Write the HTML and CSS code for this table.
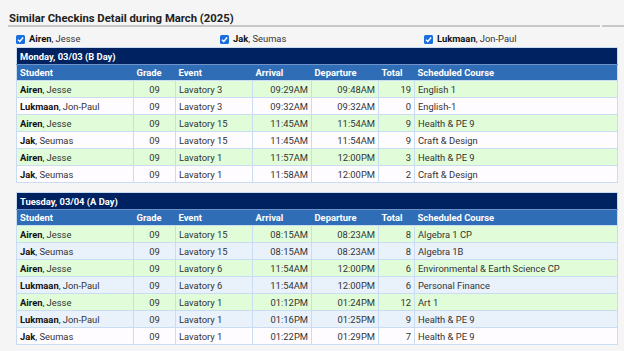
FILE: index.html
```html
<!DOCTYPE html>
<html>
<head>
<meta charset="utf-8">
<link rel="stylesheet" href="styles.css">
</head>
<body>
<div class="title-bar">
  <h1 class="title">Similar Checkins Detail during March (2025)</h1>
  <div class="title-rest"></div>
</div>
<div class="students">
  <label class="student"><span class="cb"><svg viewBox="0 0 10 10" width="9" height="9"><path d="M2.2 5.2 L4.2 7.2 L7.9 2.8" fill="none" stroke="#fff" stroke-width="1.6"/></svg></span><b>Airen</b>, Jesse</label>
  <label class="student"><span class="cb"><svg viewBox="0 0 10 10" width="9" height="9"><path d="M2.2 5.2 L4.2 7.2 L7.9 2.8" fill="none" stroke="#fff" stroke-width="1.6"/></svg></span><b>Jak</b>, Seumas</label>
  <label class="student"><span class="cb"><svg viewBox="0 0 10 10" width="9" height="9"><path d="M2.2 5.2 L4.2 7.2 L7.9 2.8" fill="none" stroke="#fff" stroke-width="1.6"/></svg></span><b>Lukmaan</b>, Jon-Paul</label>
</div>

<table class="day">
  <colgroup>
    <col class="c-student"><col class="c-grade"><col class="c-event"><col class="c-arr"><col class="c-dep"><col class="c-total"><col>
  </colgroup>
  <thead>
    <tr class="day-row"><th colspan="7">Monday, 03/03 (B Day)</th></tr>
    <tr class="head-row"><th>Student</th><th>Grade</th><th>Event</th><th>Arrival</th><th>Departure</th><th>Total</th><th>Scheduled Course</th></tr>
  </thead>
  <tbody>
    <tr class="green"><td><b>Airen</b>, Jesse</td><td class="ctr">09</td><td>Lavatory 3</td><td class="rt">09:29AM</td><td class="rt">09:48AM</td><td class="rt">19</td><td>English 1</td></tr>
    <tr class="white"><td><b>Lukmaan</b>, Jon-Paul</td><td class="ctr">09</td><td>Lavatory 3</td><td class="rt">09:32AM</td><td class="rt">09:32AM</td><td class="rt">0</td><td>English-1</td></tr>
    <tr class="green"><td><b>Airen</b>, Jesse</td><td class="ctr">09</td><td>Lavatory 15</td><td class="rt">11:45AM</td><td class="rt">11:54AM</td><td class="rt">9</td><td>Health &amp; PE 9</td></tr>
    <tr class="white"><td><b>Jak</b>, Seumas</td><td class="ctr">09</td><td>Lavatory 15</td><td class="rt">11:45AM</td><td class="rt">11:54AM</td><td class="rt">9</td><td>Craft &amp; Design</td></tr>
    <tr class="green"><td><b>Airen</b>, Jesse</td><td class="ctr">09</td><td>Lavatory 1</td><td class="rt">11:57AM</td><td class="rt">12:00PM</td><td class="rt">3</td><td>Health &amp; PE 9</td></tr>
    <tr class="white"><td><b>Jak</b>, Seumas</td><td class="ctr">09</td><td>Lavatory 1</td><td class="rt">11:58AM</td><td class="rt">12:00PM</td><td class="rt">2</td><td>Craft &amp; Design</td></tr>
  </tbody>
</table>

<table class="day">
  <colgroup>
    <col class="c-student"><col class="c-grade"><col class="c-event"><col class="c-arr"><col class="c-dep"><col class="c-total"><col>
  </colgroup>
  <thead>
    <tr class="day-row"><th colspan="7">Tuesday, 03/04 (A Day)</th></tr>
    <tr class="head-row"><th>Student</th><th>Grade</th><th>Event</th><th>Arrival</th><th>Departure</th><th>Total</th><th>Scheduled Course</th></tr>
  </thead>
  <tbody>
    <tr class="green"><td><b>Airen</b>, Jesse</td><td class="ctr">09</td><td>Lavatory 15</td><td class="rt">08:15AM</td><td class="rt">08:23AM</td><td class="rt">8</td><td>Algebra 1 CP</td></tr>
    <tr class="blue"><td><b>Jak</b>, Seumas</td><td class="ctr">09</td><td>Lavatory 15</td><td class="rt">08:15AM</td><td class="rt">08:23AM</td><td class="rt">8</td><td>Algebra 1B</td></tr>
    <tr class="green"><td><b>Airen</b>, Jesse</td><td class="ctr">09</td><td>Lavatory 6</td><td class="rt">11:54AM</td><td class="rt">12:00PM</td><td class="rt">6</td><td>Environmental &amp; Earth Science CP</td></tr>
    <tr class="blue"><td><b>Lukmaan</b>, Jon-Paul</td><td class="ctr">09</td><td>Lavatory 6</td><td class="rt">11:54AM</td><td class="rt">12:00PM</td><td class="rt">6</td><td>Personal Finance</td></tr>
    <tr class="green"><td><b>Airen</b>, Jesse</td><td class="ctr">09</td><td>Lavatory 1</td><td class="rt">01:12PM</td><td class="rt">01:24PM</td><td class="rt">12</td><td>Art 1</td></tr>
    <tr class="blue"><td><b>Lukmaan</b>, Jon-Paul</td><td class="ctr">09</td><td>Lavatory 1</td><td class="rt">01:16PM</td><td class="rt">01:25PM</td><td class="rt">9</td><td>Health &amp; PE 9</td></tr>
    <tr class="white"><td><b>Jak</b>, Seumas</td><td class="ctr">09</td><td>Lavatory 1</td><td class="rt">01:22PM</td><td class="rt">01:29PM</td><td class="rt">7</td><td>Health &amp; PE 9</td></tr>
  </tbody>
</table>
</body>
</html>
```

FILE: styles.css
```css
* { box-sizing: border-box; }
html, body { margin: 0; padding: 0; }
body {
  background: #f5f5f5;
  font-family: Roboto, "Liberation Sans", Arial, sans-serif;
  color: #222;
  overflow: hidden;
}
.title-bar {
  display: flex;
  align-items: flex-end;
  gap: 2px;
  padding-left: 8px;
}
.title {
  margin: 0;
  flex: 0 0 592px;
  font-size: 11.3px;
  font-weight: 700;
  line-height: 15px;
  padding: 11px 0 0 1px;
  height: 27px;
  color: #222;
  border-bottom: 2px solid #c8c8c8;
}
.title-rest {
  flex: 1;
  height: 2px;
  background: #c8c8c8;
}
.students {
  display: grid;
  grid-template-columns: 204px 204px 194px;
  padding: 6px 0 0 16px;
  height: 20px;
  font-size: 9.4px;
  line-height: 12px;
  color: #333;
}
.student {
  display: flex;
  align-items: center;
  height: 12px;
}
.student b { color: #111; }
.cb {
  width: 9px;
  height: 9px;
  border-radius: 1.5px;
  background: #1a6fe0;
  margin-right: 4px;
  display: inline-flex;
  align-items: center;
  justify-content: center;
}
.cb svg { display: block; }
table.day {
  margin: 0 0 9px 16px;
  width: 602px;
  border-collapse: collapse;
  table-layout: fixed;
  font-size: 9.4px;
  border: 1px solid #c9dbf0;
}
.c-student { width: 117px; }
.c-grade { width: 42px; }
.c-event { width: 77px; }
.c-arr { width: 59px; }
.c-dep { width: 67px; }
.c-total { width: 36px; }
th, td {
  padding: 0 3px;
  white-space: nowrap;
  overflow: hidden;
}
.day-row th {
  background: #002260;
  color: #fff;
  height: 17px;
  text-align: left;
  font-weight: 700;
  border-bottom: 1px solid #6f93c8;
}
.head-row th {
  background: #2f6db6;
  color: #fff;
  height: 16px;
  text-align: left;
  font-weight: 700;
}
td {
  height: 17px;
  border: 1px solid #cadcf2;
  color: #333;
}
td b { color: #111; }
.ctr { text-align: center; }
.rt { text-align: right; }
tr.green td { background: #e0fcd9; }
tr.white td { background: #fffcff; }
tr.blue td { background: #e9f1fb; }
```
